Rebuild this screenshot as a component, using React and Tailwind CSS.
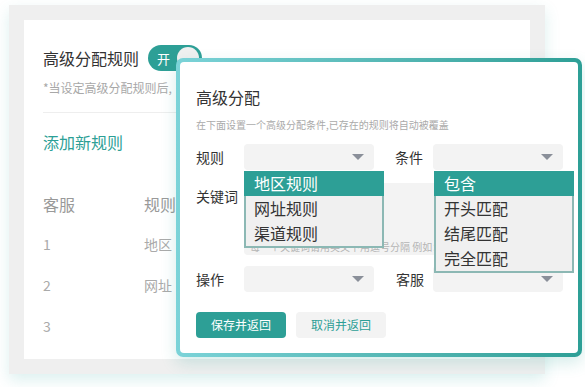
import React from "react";

const font = { fontFamily: '"Noto Sans CJK SC", "Noto Sans", sans-serif' };

function Arrow() {
  return (
    <svg width="12" height="7" viewBox="0 0 12 7" className="absolute right-[10px] top-[10px]">
      <polygon points="0,0 12,0 6,6" fill="#8a8f99" />
    </svg>
  );
}

function Select({ className = "" }) {
  return <div className={"relative h-[26px] w-[130px] rounded-[4px] bg-[#f3f3f3] " + className}><Arrow /></div>;
}

function Dropdown({ items, className }) {
  return (
    <div className={"absolute w-[140px] " + className}>
      <div className="h-[25px] bg-[#2d9f96] pl-[10px] text-[16px] leading-[25px] text-white">{items[0]}</div>
      <div className="border-2 border-t-0 border-[#8cb8b4] bg-[#f0f0f0]">
        {items.slice(1).map((t) => (
          <div key={t} className="h-[25px] pl-[8px] text-[16px] leading-[25px] text-[#333]">{t}</div>
        ))}
      </div>
    </div>
  );
}

export default function App() {
  return (
    <div className="relative h-[387px] w-[585px] overflow-hidden bg-white" style={font}>
      {/* background card */}
      <div className="ml-[9px] mt-[5px] h-[369px] w-[536px] bg-[#efefef] p-[15px] shadow-[0_6px_14px_rgba(60,170,165,0.18)]">
        <div className="h-full bg-white pl-[19px] pt-[25px]">
          <div className="flex items-center">
            <span className="text-[16px] leading-[26px] text-[#333]">高级分配规则</span>
            <div className="ml-[9px] flex h-[26px] w-[54px] items-center rounded-full bg-[#2d9f96] pl-[9px] pr-[3px]">
              <span className="text-[13px] leading-none text-white">开</span>
              <div className="ml-auto h-[22px] w-[22px] rounded-full bg-[#f0f0f0]" />
            </div>
          </div>
          <div className="mt-[9px] text-[12px] leading-[16px] text-[#a8a8a8]">*当设定高级分配规则后,</div>
          <div className="mt-[16px] h-px bg-[#eeeeee]" />
          <div className="mt-[17px] text-[16px] leading-[24px] text-[#2d9f96]">添加新规则</div>
          <div className="mt-[38px] flex text-[16px] leading-[24px] text-[#999]">
            <span className="w-[101px]">客服</span>
            <span>规则</span>
          </div>
          {[["1", "地区"], ["2", "网址"], ["3", ""]].map(([a, b], i) => (
            <div key={a} className={"flex text-[14px] leading-[20px] text-[#aaa] " + (i === 0 ? "mt-[18px]" : "mt-[21px]")}>
              <span className="w-[101px]">{a}</span>
              <span>{b}</span>
            </div>
          ))}
        </div>
      </div>

      {/* modal */}
      <div className="absolute left-[176px] top-[58px] h-[299px] w-[406px] rounded-[7px] bg-gradient-to-r from-[#7bd3d8] to-[#2d9f96] p-[4px] shadow-[0_6px_16px_rgba(45,159,150,0.2)]">
        <div className="relative h-full rounded-[4px] bg-white pl-[16px] pr-[15px] pt-[24px]">
          <div className="text-[16px] leading-[22px] text-[#333]">高级分配</div>
          <div className="mt-[10px] text-[10px] leading-[14px] text-[#aaa]">在下面设置一个高级分配条件,已存在的规则将自动被覆盖</div>
          <div className="mt-[12px] flex items-center">
            <span className="w-[48px] text-[14px] text-[#333]">规则</span>
            <Select />
            <span className="ml-[21px] w-[38px] text-[14px] text-[#333]">条件</span>
            <Select />
          </div>
          <div className="mt-[13px] flex items-start">
            <span className="w-[48px] text-[14px] leading-[26px] text-[#333]">关键词</span>
            <div className="relative h-[72px] w-[319px] rounded-[4px] bg-[#f3f3f3]">
              <span className="absolute bottom-[1px] left-[6px] whitespace-nowrap text-[10px] leading-[14px] text-[#b5b5b5]">每一个关键词请用英文下用逗号分隔 例如：北京,上海</span>
            </div>
          </div>
          <div className="mt-[11px] flex items-center">
            <span className="w-[48px] text-[14px] text-[#333]">操作</span>
            <Select />
            <span className="ml-[22px] w-[37px] text-[14px] text-[#333]">客服</span>
            <Select />
          </div>
          <div className="mt-[20px] flex gap-[10px]">
            <div className="flex h-[26px] w-[90px] items-center justify-center rounded-[4px] bg-[#2d9f96] text-[12px] text-white">保存并返回</div>
            <div className="flex h-[26px] w-[90px] items-center justify-center rounded-[4px] bg-[#f3f3f3] text-[12px] text-[#2d9f96]">取消并返回</div>
          </div>

          <Dropdown items={["地区规则", "网址规则", "渠道规则"]} className="left-[64px] top-[109px]" />
          <Dropdown items={["包含", "开头匹配", "结尾匹配", "完全匹配"]} className="left-[254px] top-[109px]" />
        </div>
      </div>
    </div>
  );
}
